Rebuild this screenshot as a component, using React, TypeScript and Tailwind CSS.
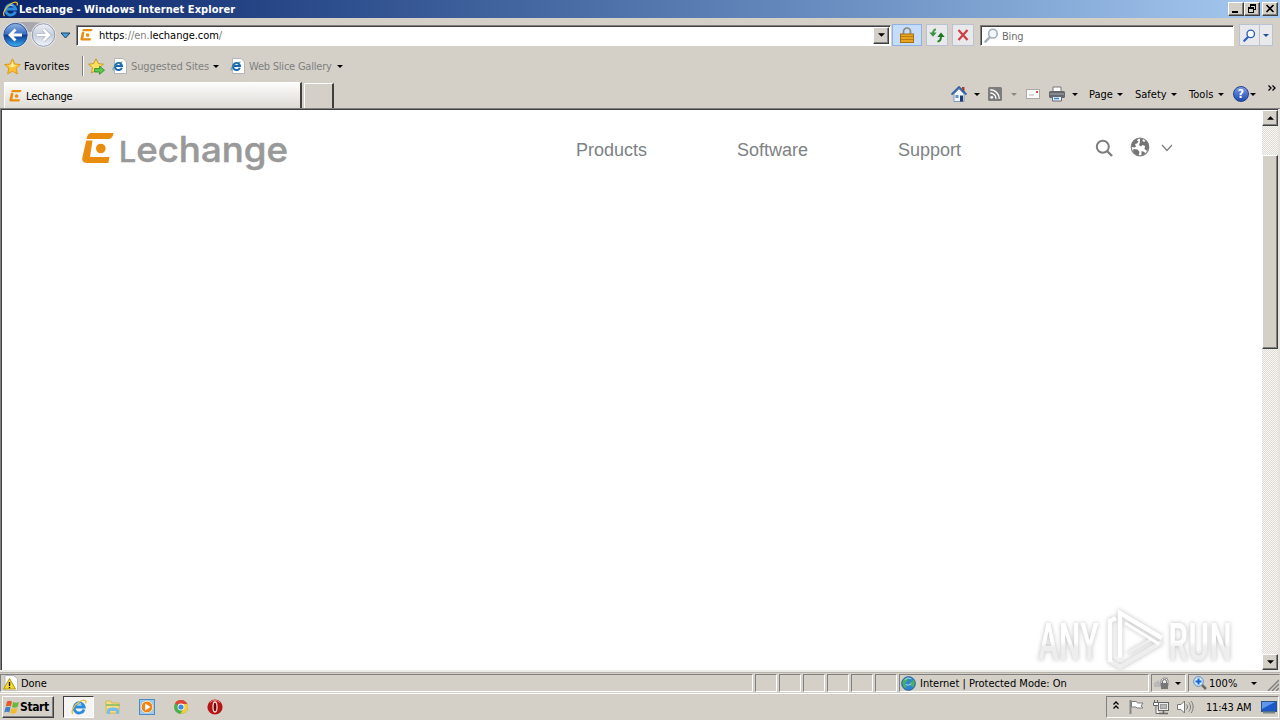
import type { ReactNode } from 'react';

const RAISED =
  'border border-t-white border-l-white border-r-[#404040] border-b-[#404040] bg-[#d4d0c8] shadow-[inset_-1px_-1px_0_#808080]';
const SUNKEN =
  'border border-t-[#808080] border-l-[#808080] border-r-white border-b-white';

const Caret = ({ className = '' }: { className?: string }) => (
  <svg
    className={`block h-[3px] w-[6px] shrink-0 ${className}`}
    viewBox="0 0 6 3"
    fill="currentColor"
  >
    <path d="M0 0h6L3 3z" />
  </svg>
);

const IeLogo = ({ className = '' }: { className?: string }) => (
  <svg className={`block shrink-0 ${className}`} viewBox="0 0 16 16" fill="none">
    <path
      d="M13 10.5A5.1 5.1 0 1 1 13.2 8H4"
      stroke="#2c8cdc"
      strokeWidth="2.8"
    />
    <path d="M4.300 6.200a4 3.600 0 0 1 6-1.400" stroke="#9cdcfc" strokeWidth="1" />
    <path
      d="M2 15C-.6 12.600 3 6 8.500 2.800 12.500.4 16.200.6 14.500 4.500"
      stroke="#f0bc30"
      strokeWidth="1.300"
    />
  </svg>
);

const PageIe = () => (
  <svg className="block h-4 w-[15px] shrink-0" viewBox="0 0 15 16">
    <path d="M2.500.5h8.500l3.500 3.500v11.500h-12z" fill="#fff" stroke="#b5b5b5" />
    <path
      d="M9.800 9.800A3.500 3.500 0 1 1 10 8H4"
      fill="none"
      stroke="#1668b4"
      strokeWidth="2"
    />
    <path
      d="M1.500 12.500C-.2 11 3 5.500 10.500 4"
      fill="none"
      stroke="#3c90a0"
    />
  </svg>
);

const SiteMark = ({ className = '' }: { className?: string }) => (
  <svg
    className={`block shrink-0 ${className}`}
    viewBox="0 0 32 31"
    fill="#ea8c0e"
  >
    <path d="M9 0h22.500c-.6 4-2.400 6-6.500 6H4.500C5.200 2.200 6.300.4 9 0z" />
    <path d="M4.200 7.500h6.300L8 24h19.500l-1.200 6H5.500C1.500 30-.2 28 .3 25z" />
    <circle cx="18.800" cy="15.500" r="4.800" />
  </svg>
);

const Star = ({ className = '' }: { className?: string }) => (
  <svg className={`block shrink-0 ${className}`} viewBox="0 0 16 16">
    <path
      d="M8 .8l2.200 4.800 5.200.6-3.900 3.500 1.100 5.300L8 12.400 3.400 15l1.100-5.300L.6 6.200l5.200-.6z"
      fill="#fcc234"
      stroke="#d8981c"
      strokeWidth=".9"
    />
    <path d="M8 3l1.200 3.500 3 .6-4.500 1.600-4-1.500 3-.6z" fill="#fff0a0" />
  </svg>
);

const TitleBar = () => (
  <div className="flex h-[18px] items-center bg-gradient-to-r from-[#0a246a] to-[#a6caf0] pl-[2px]">
    <IeLogo className="h-4 w-[17px]" />
    <span className="mt-px w-[218px] text-[11px] font-bold whitespace-nowrap tracking-[0.06px] text-white">
      Lechange - Windows Internet Explorer
    </span>
    <div className="ml-auto flex pr-[2px] text-black">
      <div className={`h-[14px] w-4 ${RAISED}`}>
        <svg viewBox="0 0 14 12" className="block h-3 w-[14px]">
          <path d="M3 8h6v2H3z" />
        </svg>
      </div>
      <div className={`h-[14px] w-4 ${RAISED}`}>
        <svg
          viewBox="0 0 14 12"
          className="block h-3 w-[14px]"
          fill="none"
          stroke="#000"
          shapeRendering="crispEdges"
        >
          <path d="M5.500 4V1.500h5v5H9M5 2.500h6M3.500 4.500h5v5h-5zM3 5.500h6" />
        </svg>
      </div>
      <div className={`ml-[2px] h-[14px] w-4 ${RAISED}`}>
        <svg
          viewBox="0 0 14 12"
          className="block h-3 w-[14px]"
          stroke="#000"
          strokeWidth="1.600"
        >
          <path d="M3.500 2l7 7M10.500 2l-7 7" />
        </svg>
      </div>
    </div>
  </div>
);

const NavButtons = () => (
  <svg className="ml-[2px] block h-[30px] w-[70px] shrink-0" viewBox="0 0 70 30">
    <defs>
      <linearGradient id="back" x2="0" y2="1">
        <stop offset="0" stopColor="#8fb4e4" />
        <stop offset=".46" stopColor="#3b6fc0" />
        <stop offset=".52" stopColor="#0e3b94" />
        <stop offset="1" stopColor="#3cb4f4" />
      </linearGradient>
      <linearGradient id="fwd" x2="0" y2="1">
        <stop offset="0" stopColor="#eef0f5" />
        <stop offset=".5" stopColor="#c7cedd" />
        <stop offset="1" stopColor="#f2f5fa" />
      </linearGradient>
    </defs>
    <path d="M10 3C20 1.500 36 1.500 46 4L38 12H20z" fill="#aaa8ae" />
    <circle cx="13.500" cy="15" r="12.800" fill="#dfe3ea" />
    <circle
      cx="13.500"
      cy="15"
      r="11.700"
      fill="url(#back)"
      stroke="#1d3f86"
      strokeWidth=".8"
    />
    <path
      d="M20 15H9m4.500-5.500L8 15l5.500 5.500"
      fill="none"
      stroke="#fff"
      strokeWidth="2.800"
    />
    <circle cx="41.500" cy="15" r="12.500" fill="#e8eaf0" />
    <circle
      cx="41.500"
      cy="15"
      r="11.300"
      fill="url(#fwd)"
      stroke="#8b93a8"
      strokeWidth=".9"
    />
    <path
      d="M35 15h11m-4.500-5.500L47 15l-5.500 5.500"
      fill="none"
      stroke="#a5aec0"
      strokeWidth="4"
    />
    <path
      d="M35 15h11m-4.500-5.500L47 15l-5.500 5.500"
      fill="none"
      stroke="#fff"
      strokeWidth="2.600"
    />
    <path d="M59 13h9l-4.500 5z" fill="#49a0dc" stroke="#16406e" />
  </svg>
);

const Magnifier = ({
  className = '',
  color,
  fill = '#fff',
}: {
  className?: string;
  color: string;
  fill?: string;
}) => (
  <svg
    className={`block shrink-0 ${className}`}
    viewBox="0 0 16 16"
    fill="none"
    stroke={color}
  >
    <path d="M6.500 9.500L1.500 14.500" strokeWidth="2.600" strokeLinecap="round" />
    <circle cx="9.500" cy="6" r="4.600" strokeWidth="1.700" fill={fill} />
  </svg>
);

const ToolButton = ({
  className = '',
  tone = 'border-[#b9c2d0] bg-[#e9e9ec]',
  children,
}: {
  className?: string;
  tone?: string;
  children: ReactNode;
}) => (
  <div
    className={`flex h-[22px] items-center justify-center border ${tone} ${className}`}
  >
    {children}
  </div>
);

const AddressRow = () => (
  <div className="flex h-[34px] items-center pt-px">
    <NavButtons />
    <div className="ml-[4px] flex h-[21px] w-[815px] items-center border border-t-[#808080] border-l-[#808080] border-r-white border-b-white bg-white pl-[3px] shadow-[inset_1px_1px_0_#404040]">
      <SiteMark className="h-[12px] w-[13px]" />
      <div className="mt-px ml-[6px] text-[11px] tracking-[-0.03px] text-[#808080]">
        <span className="text-black">https</span>://en.
        <span className="text-black">lechange.com</span>/
      </div>
      <div
        className={`mr-px ml-auto flex h-[17px] w-4 items-center justify-center ${RAISED}`}
      >
        <Caret className="h-[4px] w-[7px] text-black" />
      </div>
    </div>
    <ToolButton className="ml-px w-[30px]" tone="border-[#8fb2e6] bg-[#c6dcfb]">
      <svg viewBox="0 0 14 16" className="h-4 w-[14px]">
        <path
          d="M3.500 8V4.500a3.500 3.500 0 0 1 7 0V8"
          fill="none"
          stroke="#8c8878"
          strokeWidth="1.700"
        />
        <rect x=".5" y="7" width="13" height="8.500" fill="#e9a520" stroke="#a87010" />
        <path d="M1 9.500h12M1 12.500h12" stroke="#b87c14" />
      </svg>
    </ToolButton>
    <ToolButton className="ml-[4px] w-[22px]">
      <svg viewBox="0 0 16 16" className="h-4 w-4" fill="none" strokeWidth="2">
        <path d="M7 2.500C5 2.500 4 4 4 7" stroke="#4e9c50" />
        <path d="M.3 5.500h7.400L4 9.800z" fill="#3c9140" />
        <path d="M8.500 14.500C11 14.500 12 13 12 9" stroke="#1c8024" />
        <path d="M8.300 10h7.400L12 5.500z" fill="#17781e" />
      </svg>
    </ToolButton>
    <ToolButton className="ml-[4px] w-[22px]">
      <svg viewBox="0 0 12 12" className="h-3 w-3">
        <path
          d="M1.500 1l9 10M10.500 1l-9 10"
          stroke="#cf3f3f"
          strokeWidth="2.200"
        />
      </svg>
    </ToolButton>
    <div className="ml-[6px] flex h-[21px] w-[254px] items-center border border-t-[#808080] border-l-[#808080] border-r-white border-b-white bg-white pl-[3px] shadow-[inset_1px_1px_0_#404040]">
      <Magnifier className="h-[15px] w-[15px]" color="#a2adb8" fill="#f0f6fb" />
      <span className="mt-[2px] ml-[3px] text-[11px] tracking-[-0.2px] text-[#6d6d6d]">
        Bing
      </span>
    </div>
    <ToolButton className="ml-[5px] w-[21px]">
      <Magnifier className="h-[13px] w-[13px]" color="#2a5fc8" />
    </ToolButton>
    <ToolButton className="-ml-px w-[14px]">
      <Caret className="text-[#205090]" />
    </ToolButton>
  </div>
);

const FavoritesRow = () => (
  <div className="flex h-[29px] items-center pl-[4px] text-[11px] text-[#808080]">
    <Star className="h-[17px] w-[17px]" />
    <span className="ml-[3px] w-[58px] tracking-[0.1px] text-black">
      Favorites
    </span>
    <div className="h-[20px] w-[2px] border-r border-l border-r-white border-l-[#808080]" />
    <svg className="ml-[4px] h-[17px] w-[17px]" viewBox="0 0 17 17">
      <path
        d="M8 .8l2.200 4.800 5.200.6-3.900 3.500 1.100 5.300L8 12.400 3.400 15l1.100-5.300L.6 6.200l5.200-.6z"
        fill="#fde060"
        stroke="#c89a24"
      />
      <path
        d="M6.500 10.500h5V8l5 4.200-5 4.200v-2.400h-5z"
        fill="#5cc850"
        stroke="#2c8a28"
        strokeWidth=".8"
      />
    </svg>
    <span className="ml-[7px]">
      <PageIe />
    </span>
    <span className="mt-px ml-[4px] w-[82px] whitespace-nowrap tracking-[-0.12px]">
      Suggested Sites
    </span>
    <Caret className="text-black" />
    <span className="ml-[11px]">
      <PageIe />
    </span>
    <span className="mt-px ml-[4px] w-[87px] whitespace-nowrap tracking-[-0.22px]">
      Web Slice Gallery
    </span>
    <Caret className="ml-px text-black" />
  </div>
);

const CommandBar = () => (
  <div className="mb-px ml-auto flex h-[26px] items-center text-[11px] text-black">
    <svg viewBox="0 0 16 16" className="h-4 w-4">
      <path d="M11 1h2.500v5H11z" fill="#b03a24" />
      <path d="M3 8l5-5 5 5v7.500H3z" fill="#f2f5fa" stroke="#6c88b0" strokeWidth=".8" />
      <path d="M.5 8.500L8 1l7.500 7.500" fill="none" stroke="#3260a4" strokeWidth="1.800" />
      <path d="M4.500 9h3v3h-3z" fill="#5d94d4" />
      <path d="M9 9.500h3v6H9z" fill="#1d3c74" />
    </svg>
    <Caret className="ml-[7px]" />
    <svg viewBox="0 0 14 14" className="ml-[8px] h-[14px] w-[14px]">
      <rect width="14" height="14" rx="1.500" fill="#7d7d7d" />
      <circle cx="3.700" cy="10.300" r="1.400" fill="#fff" />
      <path
        d="M2.300 6a5.700 5.700 0 0 1 5.700 5.700M2.300 2.800a9 9 0 0 1 9 9"
        fill="none"
        stroke="#fff"
        strokeWidth="1.400"
      />
    </svg>
    <Caret className="ml-[9px] text-[#8c8880]" />
    <svg viewBox="0 0 14 10" className="ml-[9px] h-[10px] w-[14px]">
      <rect x=".5" y=".5" width="13" height="9" fill="#fafafa" stroke="#aaa" />
      <path d="M10 2h2v2h-2z" fill="#d05048" />
      <path d="M3 6h5" stroke="#b8b8b8" />
    </svg>
    <svg viewBox="0 0 16 16" className="ml-[9px] h-4 w-4">
      <path d="M4 1h8v5H4z" fill="#fff" stroke="#777" />
      <rect y="5" width="16" height="7" rx="1.500" fill="#65686c" />
      <path d="M1 8h14" stroke="#a8abb0" />
      <path d="M3.500 10.500h9V15h-9z" fill="#e8f2fc" stroke="#667" />
      <path d="M5 12.500h5" stroke="#3c84cc" strokeWidth="1.500" />
    </svg>
    <Caret className="ml-[7px]" />
    <span className="ml-[11px] w-[28px]">Page</span>
    <Caret />
    <span className="ml-[12px] w-[36px]">Safety</span>
    <Caret />
    <span className="ml-[12px] w-[29px] tracking-[0.05px]">Tools</span>
    <Caret />
    <div className="ml-[9px] flex h-4 w-4 items-center justify-center rounded-full border border-[#24418c] bg-gradient-to-b from-[#7c9ce4] to-[#1c48b4] text-[12px] leading-none font-bold text-white">
      ?
    </div>
    <Caret className="ml-px" />
    <svg
      viewBox="0 0 8 6"
      className="mr-[4px] mb-[13px] ml-[12px] h-[6px] w-[8px]"
      fill="none"
      stroke="#000"
      strokeWidth="1.300"
    >
      <path d="M.5.5L3 3 .5 5.500M4.500.5L7 3 4.500 5.500" />
    </svg>
  </div>
);

const TabRow = () => (
  <div className="flex h-[28px] items-end">
    <div className="ml-[4px] flex h-[26px] w-[298px] items-center border-t border-r-2 border-l border-t-white border-r-[#404040] border-l-white bg-gradient-to-b from-[#fcfcfb] to-[#dedbd5] pl-[4px]">
      <SiteMark className="h-[12px] w-[13px]" />
      <span className="mt-px ml-[4px] text-[11px] tracking-[-0.16px] text-black">
        Lechange
      </span>
    </div>
    <div className="ml-[2px] h-[25px] w-[30px] border-t border-r-2 border-l border-t-white border-r-[#404040] border-l-white" />
    <CommandBar />
  </div>
);

const SiteHeader = () => (
  <div className="flex h-[76px] w-full items-start pl-[80px] font-['Liberation_Sans',Arial,sans-serif] text-[18px] text-[#7d8285]">
    <div className="mt-[13px] flex w-[494px] items-start">
      <SiteMark className="mt-[10px] h-[31px] w-[32px]" />
      <svg className="ml-[4px] h-[60px] w-[190px]" viewBox="0 0 190 60">
        <text
          x="1"
          y="38.500"
          textLength="169"
          lengthAdjust="spacingAndGlyphs"
          fill="#999"
          stroke="#999"
          strokeWidth=".5"
          className="font-['Inter',sans-serif] font-medium"
        >
          <tspan fontSize="29">L</tspan>
          <tspan fontSize="35">echange</tspan>
        </text>
      </svg>
    </div>
    <span className="mt-[27px] w-[161px]">Products</span>
    <span className="mt-[27px] w-[161px]">Software</span>
    <span className="mt-[27px] w-[197px]">Support</span>
    <svg
      className="mt-[29px] h-[18px] w-[18px]"
      viewBox="0 0 18 18"
      fill="none"
      stroke="#7d7d7d"
      strokeWidth="2"
    >
      <circle cx="7.800" cy="7.800" r="6" />
      <path d="M12 12l5 5" strokeWidth="2.400" />
    </svg>
    <svg className="mt-[27px] ml-[17px] h-[20px] w-[20px]" viewBox="0 0 20 20">
      <circle cx="10" cy="10" r="8.800" fill="#fff" stroke="#858585" strokeWidth="1.200" />
      <path
        d="M1.500 8C2.500 4 5 1.800 8.500 1.300L7 3.500l1.500 1L7 6.500 5 7l1 2.500-1.500 1L2 10zM10 1.500l3 .3-.5 2L14 5l2-1.500c2 1.500 3 4 3 7l-2 3.500-2.500-2 .5-3-2.500-1L11 9.500 9 8l1-3zM3.500 12l4 .5 2 2.500-1 3.700C6 18 3.800 16 3 14zM11.500 14l3 1 .5 2-3.500 1.500z"
        fill="#757575"
      />
    </svg>
    <svg
      className="mt-[34px] ml-[11px] h-[8px] w-[12px]"
      viewBox="0 0 12 8"
      fill="none"
      stroke="#7d7d7d"
      strokeWidth="1.200"
    >
      <path d="M1 1l5 5.500L11 1" />
    </svg>
  </div>
);

const Watermark = () => (
  <div className="absolute right-[24px] -bottom-[2px] font-['Roboto',sans-serif] text-[52px] leading-none font-medium drop-shadow-[0_0_2px_#bcbcbc]">
    <svg
      className="block h-[66px] w-[204px] overflow-visible"
      viewBox="0 0 204 66"
      fill="none"
    >
      <defs>
        <linearGradient
          id="mark"
          x2="0"
          y1="16"
          y2="62"
          gradientUnits="userSpaceOnUse"
        >
          <stop offset=".42" stopColor="#fff" />
          <stop offset=".55" stopColor="#eee" />
        </linearGradient>
      </defs>
      <text
        x="4"
        y="54"
        textLength="61"
        lengthAdjust="spacingAndGlyphs"
        fill="url(#mark)"
      >
        ANY
      </text>
      <path d="M128 36L86 61l-10-6" stroke="#eee" strokeWidth="4.500" />
      <path d="M94 47l24-14" stroke="#eee" strokeWidth="3" />
      <path d="M76 56V15l6-3" stroke="#fff" strokeWidth="4.500" />
      <path d="M86 52V7l42 25" stroke="#fff" strokeWidth="4.500" />
      <path d="M91 17l34 21" stroke="#fff" strokeWidth="3" />
      <text
        x="134"
        y="54"
        textLength="64"
        lengthAdjust="spacingAndGlyphs"
        fill="url(#mark)"
      >
        RUN
      </text>
    </svg>
  </div>
);

const ScrollBar = () => (
  <div className="flex h-[560px] w-4 flex-col bg-[#ebe9e5] bg-[repeating-conic-gradient(#dfdcd6_0_25%,#f7f6f4_0_50%)] bg-[length:2px_2px]">
    <div className={`flex h-4 items-center justify-center ${RAISED}`}>
      <Caret className="h-[4px] w-[7px] rotate-180 text-black" />
    </div>
    <div className={`mt-[29px] h-[194px] ${RAISED}`} />
    <div className={`mt-auto flex h-4 items-center justify-center ${RAISED}`}>
      <Caret className="h-[4px] w-[7px] text-black" />
    </div>
  </div>
);

const StatusBar = () => (
  <div className="flex h-[18px] gap-[2px] text-[11px] text-black">
    <div className={`flex w-[753px] items-center pl-[2px] ${SUNKEN}`}>
      <svg viewBox="0 0 15 16" className="h-4 w-[15px]">
        <path d="M2 .5h9l3.500 3.500v11.500H2z" fill="#fff" stroke="#bbb" />
        <path d="M6.500 3.500l6 10.500H.6z" fill="#f8dc28" stroke="#b09410" />
        <path d="M6.500 7v4M6.500 12v1.200" stroke="#000" strokeWidth="1.300" />
      </svg>
      <span className="ml-[3px] tracking-[-0.1px]">Done</span>
    </div>
    {[0, 1, 2, 3, 4, 5].map((i) => (
      <div key={i} className={`w-[22px] ${SUNKEN}`} />
    ))}
    <div className={`flex w-[250px] items-center pl-px ${SUNKEN}`}>
      <svg viewBox="0 0 16 16" className="h-[15px] w-[15px]">
        <circle cx="8" cy="8" r="7.300" fill="#2c84d0" stroke="#1d5c94" />
        <path
          d="M2 5c2-3 5-3.500 6-3l-1 3-3 3 2 3-1 2C2 12 1 8 2 5zM10 6l4-2c1 2 1 6-1 8l-3-2z"
          fill="#48b060"
        />
        <path d="M4 4a5 4 0 0 1 7-1M5 9c2 1 4 1 6-1" stroke="#b8e4fa" fill="none" />
      </svg>
      <span className="ml-[4px] whitespace-nowrap">
        Internet | Protected Mode: On
      </span>
    </div>
    <div className={`flex w-[35px] items-center pl-[2px] ${SUNKEN}`}>
      <svg viewBox="0 0 17 14" className="h-[14px] w-[17px]">
        <path d="M0 7l5-3v2c4 0 6-4 9-5v7l-6 3H0z" fill="#bab8b8" />
        <path d="M7 4a4 4 0 0 1 7 0v6H7z" fill="#eee" stroke="#888" />
        <path d="M8.500 7V5.500a2 2 0 0 1 4 0V7" fill="none" stroke="#666" />
        <rect x="7" y="7" width="7" height="6" fill="#777" />
      </svg>
      <Caret className="ml-[4px]" />
    </div>
    <div className="flex flex-1 items-center border border-t-[#808080] border-r-[#d4d0c8] border-b-white border-l-[#808080] pl-[4px]">
      <svg viewBox="0 0 14 14" className="h-[14px] w-[14px] shrink-0">
        <path d="M9 9l4 4" stroke="#6d6a66" strokeWidth="2.500" />
        <circle cx="5.500" cy="5.500" r="4.800" fill="#d8ecfc" stroke="#5288bc" />
        <path d="M5.500 2.500v6M2.500 5.500h6" stroke="#1664d8" strokeWidth="2" />
      </svg>
      <span className="ml-[2px] w-[42px]">100%</span>
      <Caret />
      <svg
        viewBox="0 0 12 12"
        className="mt-[4px] ml-auto h-3 w-3"
        stroke="#808080"
        strokeWidth="1.500"
      >
        <path d="M1 12L12 1M5 12l7-7M9 12l3-3" />
      </svg>
    </div>
  </div>
);

const TaskBar = () => (
  <div className="mt-px flex h-[27px] items-center border-t border-white text-[11px] text-black">
    <div className={`ml-[2px] flex h-[22px] w-[52px] items-center ${RAISED}`}>
      <svg viewBox="0 0 16 16" className="ml-px h-4 w-4 shrink-0">
        <path d="M3 2.500c2-1 3-1 5 0L6.800 7.500c-2-1-3-1-5 0z" fill="#e8562c" />
        <path d="M9 3c2 1 4 1 6 0l-1.500 5c-2 1-4 1-5.500 0z" fill="#6cb83c" />
        <path d="M1.500 8.500c2-1 3-1 5 0L5.300 13.500c-2-1-3-1-5 0z" fill="#3c80d0" />
        <path d="M7.500 9c2 1 4 1 6 0L12 14c-2 1-4 1-6 0z" fill="#f4bc28" />
      </svg>
      <span className="text-[12px] font-bold tracking-[-0.4px]">
        Start
      </span>
    </div>
    <div className="ml-[9px] flex h-[22px] w-[31px] items-center justify-center border border-t-[#404040] border-r-white border-b-white border-l-[#404040] bg-[#f6f5f3]">
      <IeLogo className="h-4 w-4" />
    </div>
    <svg viewBox="0 0 16 16" className="ml-[11px] h-4 w-4">
      <path d="M1 2h5l1 2h7v10H1z" fill="#f6de88" stroke="#d8b858" />
      <path d="M1 6h14" stroke="#84b860" strokeWidth="1.500" />
      <path d="M2 15v-3.500C2 9.500 4 8.500 8 8.500s6 1 6 3V15h-3v-3H5v3z" fill="#78bce8" />
    </svg>
    <svg viewBox="0 0 16 16" className="ml-[18px] h-4 w-4">
      <rect x=".5" y=".5" width="15" height="15" fill="#9ccaf0" stroke="#4c8cc4" />
      <circle cx="8" cy="8" r="5.800" fill="#f08418" stroke="#fbe0b4" />
      <path d="M6.200 4.500L11.500 8l-5.300 3.500z" fill="#fff" />
    </svg>
    <svg viewBox="0 0 16 16" className="ml-[18px] h-4 w-4">
      <circle cx="8" cy="8" r="7" fill="#4cae4c" />
      <path d="M8 8L2 4.200A7 7 0 0 1 14.300 5H8z" fill="#e04434" />
      <path d="M8 5h6.300A7 7 0 0 1 7.500 15L11 9z" fill="#f8cc38" />
      <circle cx="8" cy="8" r="3.400" fill="#fff" />
      <circle cx="8" cy="8" r="2.600" fill="#4484e8" />
    </svg>
    <svg viewBox="0 0 16 16" className="ml-[18px] h-4 w-4">
      <circle cx="8" cy="8" r="7.600" fill="#b81414" />
      <path d="M3 3.500a7 7 0 0 1 10 0" stroke="#e87c74" fill="none" />
      <ellipse cx="8" cy="8" rx="2" ry="5" fill="#6e0808" stroke="#f0dcdc" strokeWidth="1.300" />
    </svg>
    <div className={`mr-px ml-auto flex h-[22px] w-[173px] items-center ${SUNKEN}`}>
      <svg
        viewBox="0 0 6 9"
        className="mb-[3px] ml-[6px] h-[9px] w-[6px]"
        fill="none"
        stroke="#000"
        strokeWidth="1.300"
      >
        <path d="M.5 3.500L3 1l2.500 2.500M.5 7.500L3 5l2.500 2.500" />
      </svg>
      <svg viewBox="0 0 16 16" className="ml-[9px] h-4 w-4" stroke="#7c7c7c">
        <path d="M2.500 1v14" stroke="#888" strokeWidth="2" />
        <path d="M3.500 2.500h5l1 1.500H15l-2 3 2 2H9l-1-1H3.500z" fill="#fff" />
      </svg>
      <svg viewBox="0 0 16 16" className="ml-[9px] h-4 w-4" stroke="#666">
        <rect x="5.500" y="3.500" width="10" height="8" fill="#eee" />
        <rect x="7.500" y="5.500" width="6" height="4" fill="#b8b8b8" stroke="#999" />
        <path d="M6 14.500h9M10.500 12v2" strokeWidth="1.500" />
        <path d="M1.500 3V1M4.500 3V1M.5 3.500h5v3h-5zM3 7v7.500h3" fill="#fff" />
      </svg>
      <svg viewBox="0 0 17 16" className="ml-[8px] h-4 w-[17px]" stroke="#777">
        <path d="M.5 5.500H4L7.500 2v12L4 10.500H.5z" fill="#fff" />
        <path
          d="M9.500 5.500c1.200 1.500 1.200 3.500 0 5M11.800 3.500c2.200 2.500 2.200 6.500 0 9M14 2c2.800 3 2.800 9 0 12"
          fill="none"
        />
      </svg>
      <span className="ml-[12px] w-[55px] whitespace-nowrap tracking-[-0.2px]">
        11:43 AM
      </span>
      <svg viewBox="0 0 16 13" className="h-[13px] w-4">
        <rect x=".5" y=".5" width="15" height="10" fill="#1c58c8" stroke="#2c5488" />
        <path d="M1 1h13L1 8z" fill="#5c98ec" />
        <path d="M2 11.500h12" stroke="#788" strokeWidth="2" />
      </svg>
    </div>
  </div>
);

const App = () => (
  <div className="flex h-[720px] w-[1280px] flex-col overflow-hidden bg-[#d4d0c8] font-['DejaVu_Sans_Condensed','DejaVu_Sans',sans-serif] leading-none [font-stretch:condensed]">
    <TitleBar />
    <AddressRow />
    <FavoritesRow />
    <TabRow />
    <div className="flex h-[562px] shrink-0 border-t border-l border-[#808080] bg-white">
      <div className="relative w-[1261px] border-t border-l border-[#404040] leading-[27px]">
        <SiteHeader />
        <Watermark />
      </div>
      <div className="border-t border-[#404040]">
        <ScrollBar />
      </div>
      <div className="w-[2px] bg-[#e6e3de]" />
    </div>
    <div className="mb-px h-[3px] border-b border-[#b8b4ac] bg-[#eceae6]" />
    <StatusBar />
    <TaskBar />
  </div>
);

export default App;
